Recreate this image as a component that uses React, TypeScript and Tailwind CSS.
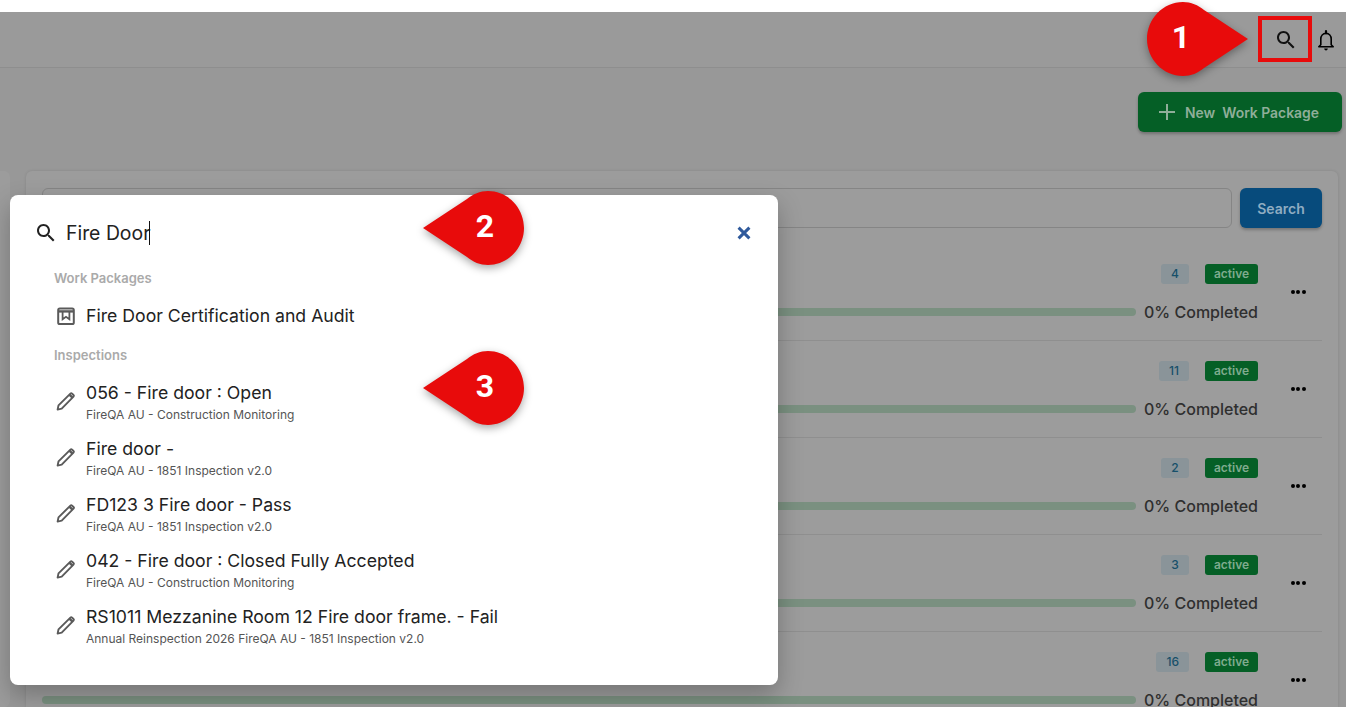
import React from "react";

const searchPath = "M15.5 14h-.79l-.28-.27C15.41 12.59 16 11.11 16 9.5 16 5.91 13.09 3 9.5 3S3 5.91 3 9.5 5.91 16 9.5 16c1.61 0 3.09-.59 4.23-1.57l.27.28v.79l5 4.99L20.49 19l-4.99-5zm-6 0C7.01 14 5 11.99 5 9.5S7.01 5 9.5 5 14 7.01 14 9.5 11.99 14 9.5 14z";

function Bell() {
  return (
    <svg viewBox="0 0 24 24" className="w-6 h-6 mr-2 mt-[1px]" fill="none" stroke="#000" strokeWidth="1.6" strokeLinejoin="round">
      <path d="M6.8 16.8V11c0-3.2 2.1-5.6 5.2-5.6s5.2 2.4 5.2 5.6v5.8l2 2H4.8z" />
      <path d="M12 5.2V3" strokeWidth="2.2" strokeLinecap="round" />
      <path d="M10.2 20.6c0 1.1.8 1.8 1.8 1.8s1.8-.7 1.8-1.8z" fill="#000" stroke="none" />
    </svg>
  );
}

function Pencil() {
  return (
    <svg viewBox="0 0 20 20" className="w-5 h-5 shrink-0" fill="none" stroke="#5a5a5a" strokeWidth="1.9" strokeLinejoin="round">
      <path d="M1.6 18.6l.9-4.2L14.4 2.6c.5-.5 1.2-.5 1.7 0l1.4 1.4c.5.5.5 1.2 0 1.7L5.7 17.6z" />
      <path d="M13.4 3.6l3.1 3.1" strokeWidth="2.4" />
    </svg>
  );
}

function PackageIcon() {
  return (
    <svg viewBox="0 0 20 20" className="w-5 h-5 shrink-0" fill="none" stroke="#5a5a5a" strokeWidth="2">
      <rect x="2.2" y="2.4" width="15.6" height="15.6" rx="1.6" />
      <path d="M2.2 5.4h15.6" strokeWidth="2.4" />
      <path d="M6.6 5.6v7.6L10 10.8l3.4 2.4V5.6" strokeWidth="1.8" />
    </svg>
  );
}

function Callout({ n, className, dir }: { n: string; className: string; dir: "left" | "right" }) {
  return (
    <div className={`absolute w-[104px] h-[76px] ${className}`}>
      <svg viewBox="0 0 104 76" className="absolute inset-0 w-[104px] h-[76px] drop-shadow-[0_3px_4px_rgba(0,0,0,0.35)]">
        {dir === "right" ? (
          <path d="M37 1C45 1 52 4 58 9L102 38 58 67C52 72 45 75 37 75 17 75 1 58 1 38S17 1 37 1z" fill="#e80b0b" />
        ) : (
          <path d="M67 1C59 1 52 4 46 9L2 38 46 67C52 72 59 75 67 75 87 75 103 58 103 38S87 1 67 1z" fill="#e80b0b" />
        )}
      </svg>
      <span className={`absolute top-0 h-[72px] flex items-center justify-center text-[32px] font-bold text-white font-['Roboto',sans-serif] ${dir === "right" ? "left-0 w-[70px]" : "left-[27px] w-[74px]"}`}>
        {n}
      </span>
    </div>
  );
}

function Row({ count, last }: { count: string; last?: boolean }) {
  return (
    <div className={`flex items-center h-[97px] shrink-0 border-b ${last ? "border-transparent" : "border-[#8f8f8f]"}`}>
      <div className="flex-1 min-w-0 flex flex-col items-end gap-4 pt-1">
        <div className="flex items-center gap-4 h-5">
          <span className="h-5 px-[10px] rounded-[3px] bg-[#8a9499] text-[#17506a] text-xs font-medium flex items-center min-w-7 justify-center">{count}</span>
          <span className="h-5 w-[53px] rounded-[3px] bg-[#055f26] text-[#7fab8e] text-xs font-semibold flex items-center justify-center">active</span>
        </div>
        <div className="flex items-center gap-2 w-full h-6">
          <div className="flex-1 h-2 rounded-full bg-[#7a9080]" />
          <span className="text-base font-medium text-[#2f2f2f] whitespace-nowrap">0% Completed</span>
        </div>
      </div>
      <div className="pl-8 pr-4">
        <div className="flex gap-[1.5px] w-4 justify-center">
          <span className="w-[4px] h-[4px] rounded-full bg-black" />
          <span className="w-[4px] h-[4px] rounded-full bg-black" />
          <span className="w-[4px] h-[4px] rounded-full bg-black" />
        </div>
      </div>
    </div>
  );
}

function Item({ title, sub }: { title: string; sub: string }) {
  return (
    <div className="flex items-center h-14 pl-[46px]">
      <div className="w-5 mr-[10px]"><Pencil /></div>
      <div className="flex flex-col -mt-[2px]">
        <span className="text-[17.67px] leading-[27px] text-[#222]">{title}</span>
        <span className="text-xs leading-[14px] text-[#555] mt-[2px]">{sub}</span>
      </div>
    </div>
  );
}

export default function App() {
  return (
    <div className="relative w-[1346px] h-[707px] overflow-hidden bg-white font-['Inter',sans-serif]">
      <div className="mt-3 h-[695px] bg-[#989898] flex flex-col">
        <header className="h-[56px] shrink-0 border-b border-[#8e8e8e] bg-[#9a9a9a] flex items-center justify-end">
          <svg viewBox="0 0 24 24" className="w-6 h-6 mr-4 mt-[1px]"><path d={searchPath} fill="#111" /></svg>
          <Bell />
        </header>
        <div className="flex justify-end pt-6 pr-1 h-[103px] shrink-0">
          <button className="w-[204px] h-10 rounded-md bg-[#055f26] shadow-[0_2px_3px_rgba(0,0,0,0.25)] flex items-center pl-[17px] gap-[6px] text-[#8fae99] text-[13.9px] leading-none font-semibold">
            <svg viewBox="0 0 24 24" className="w-6 h-6" fill="none" stroke="#8fae99" strokeWidth="2"><path d="M12 4v16M4 12h16" /></svg>
            <span className="whitespace-pre pt-1">New  Work Package</span>
          </button>
        </div>
        <div className="flex gap-4 flex-1 min-h-0">
          <div className="w-[10px] bg-[#9c9c9c] rounded-r-md" />
          <div className="w-[1312px] bg-[#9c9c9c] rounded-t-md px-4 pt-[17px] flex flex-col shadow-[0_0_3px_rgba(0,0,0,0.12)]">
            <div className="flex gap-2 shrink-0 mb-4">
              <div className="flex-1 h-10 rounded-md border border-[#858585]" />
              <button className="w-[82px] h-10 pt-[2px] rounded-md bg-[#074b7c] text-[#8fadc2] text-sm font-semibold shadow-[0_2px_3px_rgba(0,0,0,0.25)]">Search</button>
            </div>
            <Row count="4" />
            <Row count="11" />
            <Row count="2" />
            <Row count="3" />
            <Row count="16" last />
          </div>
        </div>
      </div>

      <div className="absolute left-[10px] top-[195px] w-[768px] h-[490px] bg-white rounded-lg shadow-[0_10px_24px_rgba(0,0,0,0.25)]">
        <div className="flex items-center h-[76px] pl-[24px] pr-[24px]">
          <svg viewBox="0 0 24 24" className="w-6 h-6 shrink-0"><path d={searchPath} fill="#222" /></svg>
          <div className="ml-2 flex-1 flex items-center text-[19.4px] text-[#222] pt-[1px]">
            <span>Fire Door</span>
            <span className="w-px h-6 bg-[#111] -ml-[1px]" />
          </div>
          <svg viewBox="0 0 24 24" className="w-5 h-5" fill="none" stroke="#2f5a9c" strokeWidth="3.6"><path d="M5.5 5.5l13 13M18.5 5.5l-13 13" /></svg>
        </div>
        <div className="pl-[44px] text-[13px] font-semibold text-[#aaa] h-5 leading-5 -mt-[3px]">Work Packages</div>
        <div className="flex items-center gap-[10px] pl-[46px] h-14 text-[17.67px] text-[#222]">
          <PackageIcon />
          <span>Fire Door Certification and Audit</span>
        </div>
        <div className="pl-[44px] text-[13px] font-semibold text-[#aaa] h-5 leading-5 mt-[1px] mb-2">Inspections</div>
        <Item title="056 - Fire door : Open" sub="FireQA AU - Construction Monitoring" />
        <Item title="Fire door -" sub="FireQA AU - 1851 Inspection v2.0" />
        <Item title="FD123 3 Fire door - Pass" sub="FireQA AU - 1851 Inspection v2.0" />
        <Item title="042 - Fire door : Closed Fully Accepted" sub="FireQA AU - Construction Monitoring" />
        <Item title="RS1011 Mezzanine Room 12 Fire door frame. - Fail" sub="Annual Reinspection 2026 FireQA AU - 1851 Inspection v2.0" />
      </div>

      <div className="absolute left-[1258px] top-[16px] w-[54px] h-[46px] border-[4px] border-[#e80b0b]" />
      <Callout n="1" dir="right" className="left-[1146px] top-[1px]" />
      <Callout n="2" dir="left" className="left-[421px] top-[190px]" />
      <Callout n="3" dir="left" className="left-[421px] top-[350px]" />
    </div>
  );
}
